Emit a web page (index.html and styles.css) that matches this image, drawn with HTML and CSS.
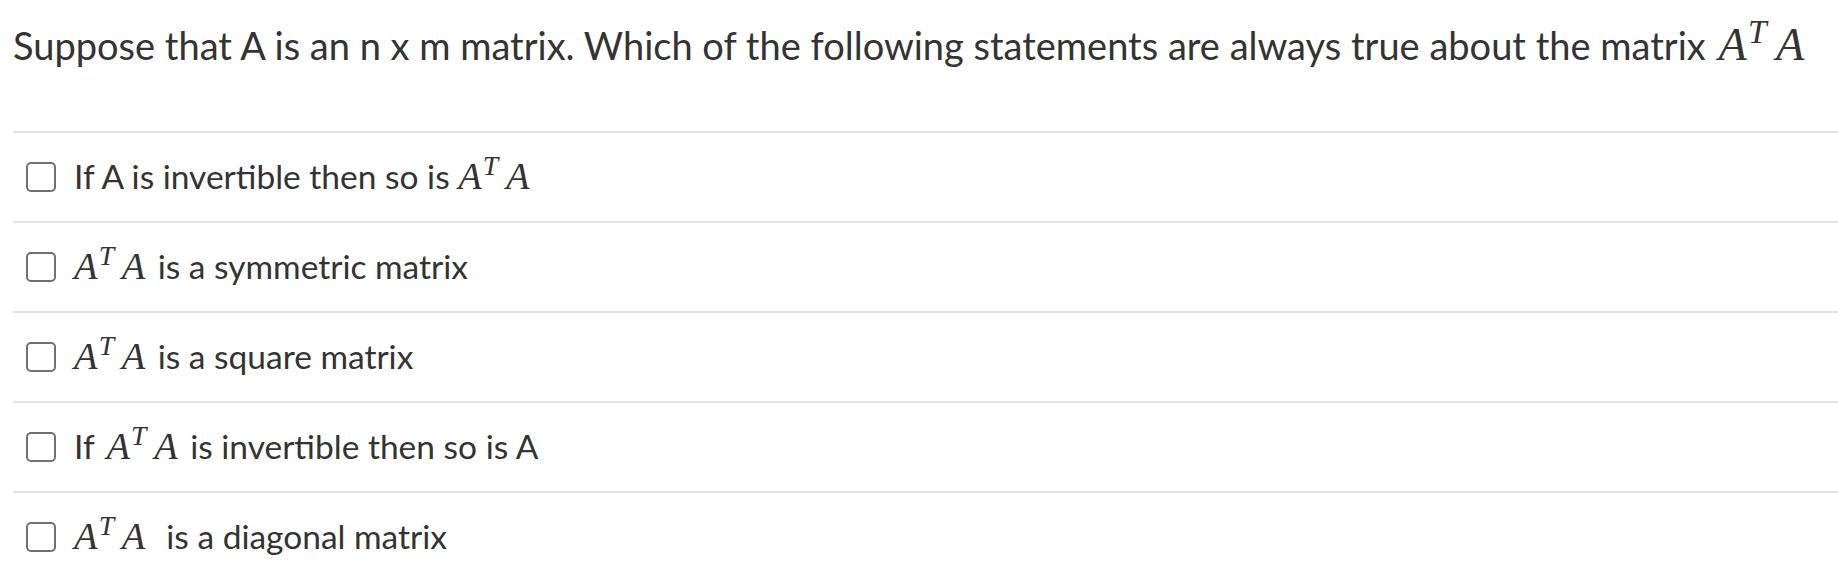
FILE: index.html
```html
<!DOCTYPE html>
<html lang="en">
<head>
<meta charset="utf-8">
<title>Quiz question</title>
<link rel="stylesheet" href="styles.css">
</head>
<body>
<div class="question">
  <div class="question-text">Suppose that A is an n x m matrix. Which of the following statements are always true about the matrix <span class="math q-math"><span class="mi">A</span><span class="sup">T</span><span class="mi mi2">A</span></span></div>
  <ul class="answers">
    <li class="answer"><span class="box"></span><span class="label">If A is invertible then so is <span class="math"><span class="mi">A</span><span class="sup">T</span><span class="mi mi2">A</span></span></span></li>
    <li class="answer"><span class="box"></span><span class="label"><span class="math before"><span class="mi">A</span><span class="sup">T</span><span class="mi mi2">A</span></span> is a symmetric matrix</span></li>
    <li class="answer"><span class="box"></span><span class="label"><span class="math before"><span class="mi">A</span><span class="sup">T</span><span class="mi mi2">A</span></span> is a square matrix</span></li>
    <li class="answer"><span class="box"></span><span class="label">If <span class="math before after"><span class="mi">A</span><span class="sup">T</span><span class="mi mi2">A</span></span> is invertible then so is A</span></li>
    <li class="answer"><span class="box"></span><span class="label"><span class="math before"><span class="mi">A</span><span class="sup">T</span><span class="mi mi2">A</span></span>&nbsp; is a diagonal matrix</span></li>
  </ul>
</div>
</body>
</html>
```
FILE: styles.css
```css
html, body {
  margin: 0;
  padding: 0;
  background: #ffffff;
}
body {
  font-family: Lato, "Liberation Sans", sans-serif;
  color: #333333;
  overflow: hidden;
}
.question {
  padding-left: 13px;
}
.question-text {
  font-size: 38px;
  line-height: 46px;
  padding-top: 22px;
  margin-bottom: 63px;
  white-space: nowrap;
}
.answers {
  list-style: none;
  margin: 0;
  padding: 0;
}
.answer {
  border-top: 2px solid #e2e2e2;
  display: flex;
  align-items: flex-start;
  padding: 29px 0 29px 13px;
  height: 30px;
}
.box {
  flex: none;
  width: 30px;
  height: 30px;
  box-sizing: border-box;
  border: 2.5px solid #707070;
  border-radius: 5px;
  margin-right: 18px;
}
.label {
  font-size: 33.5px;
  line-height: 30px;
  white-space: nowrap;
  margin-top: -5px;
}
.math {
  font-family: "Liberation Serif", "Times New Roman", serif;
  font-style: italic;
  font-size: 1.15em;
  line-height: 1;
  white-space: nowrap;
}
.q-math {
  font-size: 1.22em;
  margin-left: 3px;
}
.before {
  margin-right: 0.1em;
}
.after {
  margin-left: 0.1em;
}
.sup {
  font-size: 0.72em;
  line-height: 0;
  position: relative;
  top: -0.52em;
  margin-left: 0.04em;
}
.mi2 {
  margin-left: 0.2em;
}
```
